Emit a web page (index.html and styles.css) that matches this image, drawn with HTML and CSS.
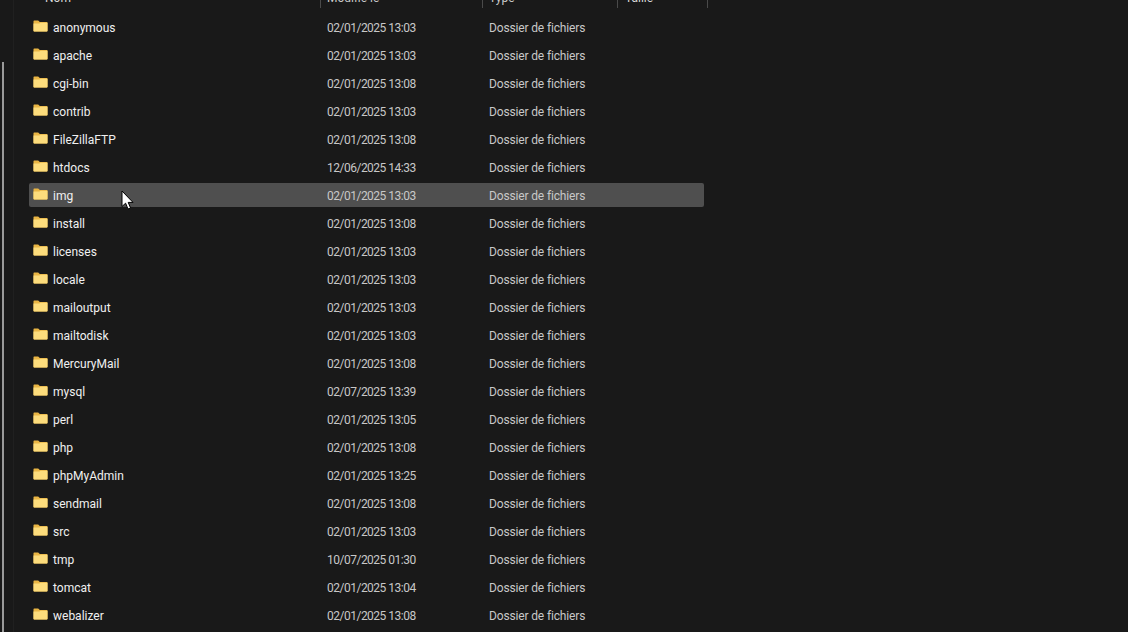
FILE: index.html
```html
<!DOCTYPE html>
<html lang="fr">
<head>
    <meta charset="UTF-8">
    <title>Explorateur de fichiers</title>
    <link rel="stylesheet" href="styles.css">
</head>
<body>
    <svg width="0" height="0" class="defs">
        <symbol id="folder" viewBox="0 0 15 12">
            <path d="M0.5 1.2 Q0.5 0.5 1.2 0.5 H5.2 L6.8 2 H13.8 Q14.5 2 14.5 2.7 V10.8 Q14.5 11.5 13.8 11.5 H1.2 Q0.5 11.5 0.5 10.8 Z" fill="#e9b544"/>
            <path d="M0.5 3.6 H6.4 L7.6 2.8 H14.5 V10.8 Q14.5 11.5 13.8 11.5 H1.2 Q0.5 11.5 0.5 10.8 Z" fill="#fcdc7c"/>
        </symbol>
    </svg>

    <div class="scrollbar"><div class="scrollbar-thumb"></div></div>
    <div class="nav-line"></div>

    <div class="explorer">
        <div class="list-header">
            <div class="col-name">Nom</div>
            <div class="col-date">Modifié le</div>
            <div class="col-type">Type</div>
            <div class="col-size">Taille</div>
        </div>
        <div id="rows"></div>
    </div>

    <svg class="cursor" width="13" height="20" viewBox="0 0 13 20">
        <path d="M1 1 V16.5 L4.6 13.2 L7 19 L9.6 18 L7.2 12.4 H12 Z" fill="#fff" stroke="#000" stroke-width="1"/>
    </svg>

    <script>
        const folders = [
            ['anonymous', '02/01/2025 13:03'],
            ['apache', '02/01/2025 13:03'],
            ['cgi-bin', '02/01/2025 13:08'],
            ['contrib', '02/01/2025 13:03'],
            ['FileZillaFTP', '02/01/2025 13:08'],
            ['htdocs', '12/06/2025 14:33'],
            ['img', '02/01/2025 13:03'],
            ['install', '02/01/2025 13:08'],
            ['licenses', '02/01/2025 13:03'],
            ['locale', '02/01/2025 13:03'],
            ['mailoutput', '02/01/2025 13:03'],
            ['mailtodisk', '02/01/2025 13:03'],
            ['MercuryMail', '02/01/2025 13:08'],
            ['mysql', '02/07/2025 13:39'],
            ['perl', '02/01/2025 13:05'],
            ['php', '02/01/2025 13:08'],
            ['phpMyAdmin', '02/01/2025 13:25'],
            ['sendmail', '02/01/2025 13:08'],
            ['src', '02/01/2025 13:03'],
            ['tmp', '10/07/2025 01:30'],
            ['tomcat', '02/01/2025 13:04'],
            ['webalizer', '02/01/2025 13:08']
        ];

        // Build one row per folder
        const rows = document.getElementById('rows');
        folders.forEach(function(folder) {
            const row = document.createElement('div');
            row.className = folder[0] === 'img' ? 'row row-hover' : 'row';
            row.innerHTML =
                '<div class="col-name"><svg class="folder-icon"><use href="#folder"/></svg>' + folder[0] + '</div>' +
                '<div class="col-date">' + folder[1] + '</div>' +
                '<div class="col-type">Dossier de fichiers</div>';
            rows.appendChild(row);
        });
    </script>
</body>
</html>
```

FILE: styles.css
```css
html, body {
    height: 100%;
}
body {
    font-family: Roboto, sans-serif;
    font-size: 12px;
    margin: 0;
    background-color: #191919;
    color: #f0f0f0;
    overflow: hidden;
}
.defs {
    position: absolute;
}
.scrollbar {
    position: absolute;
    left: 2px;
    top: 0;
    bottom: 0;
    width: 2px;
}
.scrollbar-thumb {
    margin-top: 62px;
    height: 570px;
    background-color: #9a9a9a;
}
.nav-line {
    position: absolute;
    left: 13px;
    top: 0;
    bottom: 0;
    width: 1px;
    background-color: #202020;
}
.explorer {
    margin-left: 29px;
    margin-top: -16px;
    width: 675px;
}
.list-header {
    display: flex;
    height: 24px;
    margin-bottom: 7px;
    color: #d8d8d8;
}
.list-header > div {
    display: flex;
    align-items: center;
    padding-top: 3px;
    border-right: 1px solid #4a4a4a;
    box-sizing: border-box;
}
.list-header .col-name {
    padding-left: 16px;
}
.list-header .col-date {
    width: 162px;
    padding-left: 6px;
    letter-spacing: 0;
}
.list-header .col-type {
    width: 135px;
    padding-left: 6px;
    letter-spacing: 0;
}
.list-header .col-size {
    width: 90px;
    flex: none;
    padding-left: 7px;
}
.row {
    display: flex;
    align-items: center;
    height: 24px;
    margin: 2px 0;
    padding-top: 2px;
    box-sizing: border-box;
    border-radius: 2px;
}
.row + .row {
    margin-top: 4px;
}
.row-hover {
    background-color: #4f4f4f;
}
.col-name {
    display: flex;
    align-items: center;
    width: 292px;
    flex: none;
    box-sizing: border-box;
    padding-left: 4px;
}
.col-date {
    width: 162px;
    flex: none;
    box-sizing: border-box;
    padding-left: 6px;
    color: #c8c8c8;
    letter-spacing: -0.5px;
}
.col-type {
    flex: none;
    box-sizing: border-box;
    padding-left: 6px;
    color: #c8c8c8;
    letter-spacing: -0.15px;
}
.folder-icon {
    width: 15px;
    height: 12px;
    margin-right: 5px;
    margin-top: -4px;
}
.cursor {
    position: absolute;
    left: 121px;
    top: 190px;
}
```
